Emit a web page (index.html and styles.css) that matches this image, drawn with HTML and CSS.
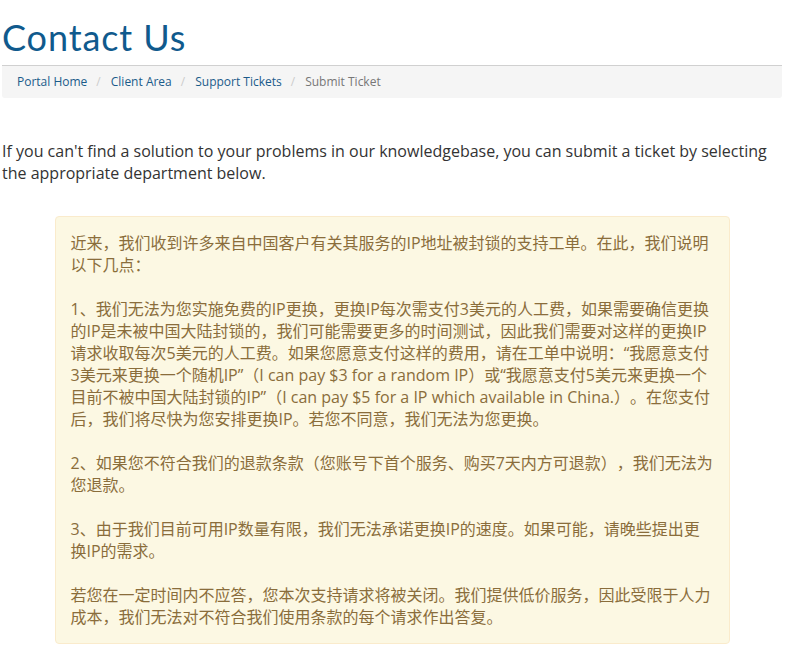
FILE: index.html
```html
<!DOCTYPE html>
<html lang="zh-CN">
<head>
<meta charset="utf-8">
<title>Contact Us</title>
<link rel="stylesheet" href="styles.css">
</head>
<body>
<div class="page">
  <h1 class="page-title">Contact Us</h1>
  <ol class="breadcrumb">
    <li><a href="#">Portal Home</a></li>
    <li><a href="#">Client Area</a></li>
    <li><a href="#">Support Tickets</a></li>
    <li class="active">Submit Ticket</li>
  </ol>
  <p class="intro">If you can't find a solution to your problems in our knowledgebase, you can submit a ticket by selecting<br>the appropriate department below.</p>
  <div class="alert">
    <p>近来，我们收到许多来自中国客户有关其服务的IP地址被封锁的支持工单。在此，我们说明<br>以下几点：</p>
    <p>1、我们无法为您实施免费的IP更换，更换IP每次需支付3美元的人工费，如果需要确信更换<br>的IP是未被中国大陆封锁的，我们可能需要更多的时间测试，因此我们需要对这样的更换IP<br>请求收取每次5美元的人工费。如果您愿意支付这样的费用，请在工单中说明：“我愿意支付<br>3美元来更换一个随机IP”（I can pay $3 for a random IP）或“我愿意支付5美元来更换一个<br>目前不被中国大陆封锁的IP”（I can pay $5 for a IP which available in China.）。在您支付<br>后，我们将尽快为您安排更换IP。若您不同意，我们无法为您更换。</p>
    <p>2、如果您不符合我们的退款条款（您账号下首个服务、购买7天内方可退款），我们无法为<br>您退款。</p>
    <p>3、由于我们目前可用IP数量有限，我们无法承诺更换IP的速度。如果可能，请晚些提出更<br>换IP的需求。</p>
    <p>若您在一定时间内不应答，您本次支持请求将被关闭。我们提供低价服务，因此受限于人力<br>成本，我们无法对不符合我们使用条款的每个请求作出答复。</p>
  </div>
</div>
</body>
</html>
```

FILE: styles.css
```css
html, body {
  margin: 0;
  padding: 0;
  background: #ffffff;
}

body {
  font-family: "Open Sans", "Noto Sans CJK SC", sans-serif;
  font-size: 16px;
  line-height: 1.42857;
  color: #333333;
}

.page {
  padding: 0 10px 0 2px;
}

.page-title {
  margin: 18px 0 7px;
  font-family: Lato, "Open Sans", sans-serif;
  font-weight: 400;
  font-size: 36px;
  line-height: 39.6px;
  letter-spacing: 0.9px;
  color: #105a8d;
}

.breadcrumb {
  list-style: none;
  margin: 0;
  padding: 7px 15px;
  background: #f5f5f5;
  border-top: 1px solid #d0d0d0;
  border-radius: 0 0 3px 3px;
  font-size: 12px;
  line-height: 18px;
  display: flex;
}

.breadcrumb li + li::before {
  content: "/";
  padding: 0 10px 0 9px;
  color: #cccccc;
}

.breadcrumb a {
  color: #1b5b8a;
  text-decoration: none;
}

.breadcrumb .active {
  color: #777777;
}

.intro {
  margin: 42px 0 0;
}

.alert {
  margin: 31px auto 0;
  width: 643px;
  padding: 15px;
  background: #fcf8e3;
  border: 1px solid #faebcc;
  border-radius: 4px;
  color: #8a6d3b;
  font-size: 16px;
  line-height: 22px;
  text-spacing-trim: space-all;
}

.alert p {
  margin: 0 0 22px;
  white-space: nowrap;
}

.alert p:last-child {
  margin-bottom: 0;
}
```
